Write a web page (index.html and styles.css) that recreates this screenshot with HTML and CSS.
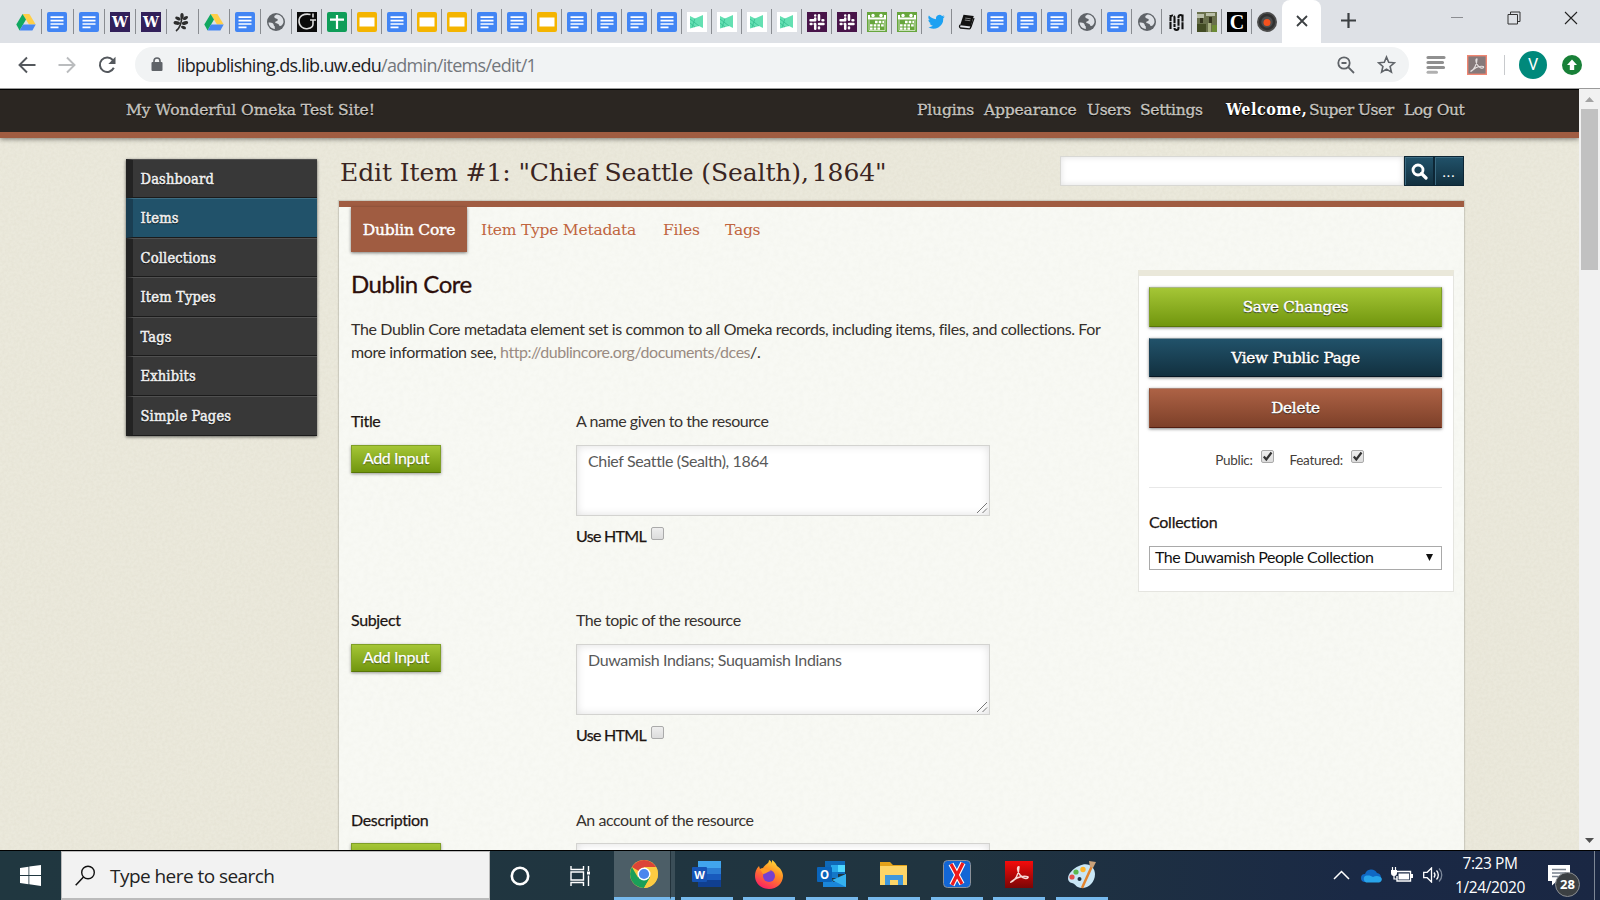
FILE: index.html
```html
<!DOCTYPE html>
<html lang="en">
<head>
<meta charset="utf-8">
<title>Edit Item #1</title>
<link rel="stylesheet" href="styles.css">
</head>
<body>
<svg class="defs" width="0" height="0" aria-hidden="true">
  <defs>
    <symbol id="doc" viewBox="0 0 20 20"><rect width="20" height="20" rx="2" fill="#4285f4"/><path d="M3.500 5.200h13M3.500 8.600h13M3.500 12h13M3.500 15.300h8" stroke="#fff" stroke-width="1.700"/></symbol>
    <symbol id="drive" viewBox="0 0 20 20"><path d="M6.600 2h6.800l6.300 10.500h-6.700z" fill="#ffcf48"/><path d="M6.600 2 10 7.600 3.600 18.500.3 12.500z" fill="#11a861"/><path d="M7 12.500h12.700l-3.300 6H3.600z" fill="#4787f3"/></symbol>
    <symbol id="uw" viewBox="0 0 20 20"><rect width="20" height="20" fill="#32205a"/><text x="10" y="15" text-anchor="middle" textLength="16" lengthAdjust="spacingAndGlyphs" font-family="DejaVu Serif" font-weight="bold" font-size="14" fill="#fff">W</text></symbol>
    <symbol id="leaf" viewBox="0 0 20 20"><path d="M4 19C8 16 10 11 10 2" fill="none" stroke="#2d2d2d" stroke-width="1.600"/><g fill="#2d2d2d"><ellipse cx="10" cy="4" rx="1.700" ry="3"/><ellipse cx="6" cy="6.500" rx="3" ry="1.600" transform="rotate(25 6 6.500)"/><ellipse cx="13.500" cy="6" rx="2.800" ry="1.600" transform="rotate(-30 13.500 6)"/><ellipse cx="4.800" cy="11" rx="3.300" ry="1.800" transform="rotate(8 4.800 11)"/><ellipse cx="13" cy="11" rx="3.200" ry="1.800" transform="rotate(-12 13 11)"/><ellipse cx="11.500" cy="15.500" rx="2.600" ry="1.500" transform="rotate(20 11.500 15.500)"/></g></symbol>
    <symbol id="globe" viewBox="0 0 20 20"><circle cx="10" cy="10" r="9" fill="#5f6368"/><path d="M2.500 10.500c2 .2 3.800.1 4.700 1.300.9 1 .2 2 1.500 2.400l.2 2.900C5.200 16.600 2.800 14 2.500 10.500zM10.800 2.600c-2 .8-3.400 2.200-1.800 3.400 1.200.8 2.700.5 2.800 1.900 0 1.500-2.500.9-2.600 2.300 0 1.500 2.500 1 3.400 2 .6.800.3 1.700 1.500 1.800 1.500 0 2.700-1.500 3.400-3.800.2-4-2.700-7.300-6.700-7.600z" fill="#dee1e6"/></symbol>
    <symbol id="gee" viewBox="0 0 20 20"><rect width="20" height="20" fill="#0b0b0b"/><path d="M13.500 2.500C7 1 2 4 2 9s4 8.500 9 7.500c3.500-.5 5-2 5-4.500V8M13 8h6M16 1.500v4" fill="none" stroke="#ddd" stroke-width="1.600"/></symbol>
    <symbol id="sheet" viewBox="0 0 20 20"><rect width="20" height="20" rx="2" fill="#0f9d58"/><path d="M3 7.700h14M10 3v14" stroke="#fff" stroke-width="2.200"/></symbol>
    <symbol id="slides" viewBox="0 0 20 20"><rect width="20" height="20" rx="2" fill="#f4b400"/><rect x="2.500" y="5.500" width="15" height="9" fill="#fff"/></symbol>
    <symbol id="mesh" viewBox="0 0 20 20"><rect width="20" height="20" fill="#fff"/><path d="M3 4l5 2.500 8-3.500v13l-4-2-9 2.500z" fill="#63e0b2"/><path d="M3 7l9 7M3 11l5 4M8 6.500l-3 9" stroke="#35bd91" stroke-width=".8"/></symbol>
    <symbol id="slack" viewBox="0 0 20 20"><rect width="20" height="20" fill="#481449"/><g stroke="#fff" stroke-width="2.500" stroke-linecap="round"><path d="M8.200 6.500V7.500M3.500 8.200H8.200M12 3.300V7.800M15.500 8.200h.8M3.700 12h.8M8.200 12.200v4.500M12 12h4.500M12 15.500v.8M8.200 3.500v.1M7.700 12h.4"/></g></symbol>
    <symbol id="cal" viewBox="0 0 20 20"><rect width="20" height="20" fill="#67a63d"/><path d="M2 3v3.500h16V3" fill="none" stroke="#fff" stroke-width="2"/><circle cx="6" cy="3.500" r="1.700" fill="#fff"/><circle cx="14" cy="3.500" r="1.700" fill="#fff"/><path d="M8 10h9M3 13.300h14M3 16.600h11" stroke="#fff" stroke-width="2.300" stroke-dasharray="2.600 1.100"/><path d="M2 7.500v11h16v-11" fill="none" stroke="#e1efd7" stroke-width=".8"/></symbol>
    <symbol id="bird" viewBox="0 0 24 24"><path fill="#1da1f2" d="M23.600 4.900a9.700 9.700 0 0 1-2.800.8 4.900 4.900 0 0 0 2.100-2.700c-.9.600-2 1-3.100 1.200a4.900 4.900 0 0 0-8.400 4.500A13.900 13.900 0 0 1 1.300 3.600a4.900 4.900 0 0 0 1.500 6.500 4.900 4.900 0 0 1-2.200-.6v.1a4.900 4.900 0 0 0 3.900 4.800c-.7.200-1.500.2-2.200.1a4.900 4.900 0 0 0 4.600 3.400A9.900 9.900 0 0 1 0 19.900 13.900 13.900 0 0 0 21.500 7.500c.8-.7 1.500-1.600 2.100-2.600z"/></symbol>
    <symbol id="book" viewBox="0 0 20 20"><path d="M6.500 2 18.500 3.500 15 16 2.500 14.500z" fill="#111"/><path d="M2.500 14c-1 1.500-1 3 .5 3.700l10.500 1c1 0 1.500-2 2-3L18.800 6" fill="none" stroke="#111" stroke-width="1.600"/><path d="M8.500 6l6.500.8M8 8.300l6.500.8" stroke="#999" stroke-width="1"/></symbol>
    <symbol id="em" viewBox="0 0 20 20"><path d="M3.500 17V5.500a2 2 0 0 1 4 0V15M3.500 3v1M7.500 16a2 2 0 0 0 4 0V5a2 2 0 0 1 4 0M15.500 2.500V18" fill="none" stroke="#111" stroke-width="2.100" stroke-dasharray="7 .8"/></symbol>
    <symbol id="photo" viewBox="0 0 20 20"><rect width="20" height="20" fill="#69704c"/><path d="M0 2h7v4H0zM9 1h9v3H9z" fill="#b9bea8"/><path d="M3 6h3v5H3zM12 5h3v6h-3z" fill="#34351f"/><path d="M0 12h9v8H0z" fill="#434c24"/><path d="M11 11h3v9h-3z" fill="#a7b082"/><path d="M15 13h5v7h-5z" fill="#6c8a35"/></symbol>
    <symbol id="cee" viewBox="0 0 20 20"><rect width="20" height="20" fill="#000"/><text x="10" y="16.500" text-anchor="middle" font-family="Liberation Serif" font-weight="bold" font-size="20" fill="#fff">C</text></symbol>
    <symbol id="disc" viewBox="0 0 20 20"><circle cx="10" cy="10" r="10" fill="#4d4d4d"/><circle cx="10" cy="10" r="7" fill="none" stroke="#303030" stroke-width="2.500"/><circle cx="10" cy="10.500" r="3.500" fill="#f4511e"/></symbol>
  </defs>
</svg>
<div class="screen">
  <div class="tabstrip">
    <div class="tabs">
      <span class="tab wide"><svg class="fav"><use href="#drive"/></svg></span><span class="tab wide"><svg class="fav"><use href="#doc"/></svg></span><span class="tab wide"><svg class="fav"><use href="#doc"/></svg></span><span class="tab wide"><svg class="fav"><use href="#uw"/></svg></span><span class="tab wide"><svg class="fav"><use href="#uw"/></svg></span><span class="tab wide"><svg class="fav"><use href="#leaf"/></svg></span><span class="tab wide"><svg class="fav"><use href="#drive"/></svg></span><span class="tab wide"><svg class="fav"><use href="#doc"/></svg></span><span class="tab wide"><svg class="fav"><use href="#globe"/></svg></span>
      <span class="tab"><svg class="fav"><use href="#gee"/></svg></span><span class="tab"><svg class="fav"><use href="#sheet"/></svg></span><span class="tab"><svg class="fav"><use href="#slides"/></svg></span><span class="tab"><svg class="fav"><use href="#doc"/></svg></span><span class="tab"><svg class="fav"><use href="#slides"/></svg></span><span class="tab"><svg class="fav"><use href="#slides"/></svg></span><span class="tab"><svg class="fav"><use href="#doc"/></svg></span><span class="tab"><svg class="fav"><use href="#doc"/></svg></span><span class="tab"><svg class="fav"><use href="#slides"/></svg></span>
      <span class="tab"><svg class="fav"><use href="#doc"/></svg></span><span class="tab"><svg class="fav"><use href="#doc"/></svg></span><span class="tab"><svg class="fav"><use href="#doc"/></svg></span><span class="tab"><svg class="fav"><use href="#doc"/></svg></span>
      <span class="tab"><svg class="fav"><use href="#mesh"/></svg></span><span class="tab"><svg class="fav"><use href="#mesh"/></svg></span><span class="tab"><svg class="fav"><use href="#mesh"/></svg></span><span class="tab"><svg class="fav"><use href="#mesh"/></svg></span>
      <span class="tab"><svg class="fav"><use href="#slack"/></svg></span><span class="tab"><svg class="fav"><use href="#slack"/></svg></span><span class="tab"><svg class="fav"><use href="#cal"/></svg></span><span class="tab"><svg class="fav"><use href="#cal"/></svg></span><span class="tab"><svg class="fav small"><use href="#bird"/></svg></span><span class="tab"><svg class="fav small"><use href="#book"/></svg></span>
      <span class="tab"><svg class="fav"><use href="#doc"/></svg></span><span class="tab"><svg class="fav"><use href="#doc"/></svg></span><span class="tab"><svg class="fav"><use href="#doc"/></svg></span><span class="tab"><svg class="fav"><use href="#globe"/></svg></span><span class="tab"><svg class="fav"><use href="#doc"/></svg></span><span class="tab"><svg class="fav"><use href="#globe"/></svg></span><span class="tab"><svg class="fav"><use href="#em"/></svg></span><span class="tab"><svg class="fav"><use href="#photo"/></svg></span><span class="tab"><svg class="fav"><use href="#cee"/></svg></span><span class="tab last"><svg class="fav"><use href="#disc"/></svg></span>
    </div>
    <div class="tab-active"><svg width="12" height="12" viewBox="0 0 12 12"><path d="M1 1l10 10M11 1 1 11" stroke="#3c4043" stroke-width="1.800"/></svg></div>
    <svg class="newtab" width="15" height="15" viewBox="0 0 15 15"><path d="M7.500 0v15M0 7.500h15" stroke="#3c4043" stroke-width="2.200"/></svg>
    <div class="winctl">
      <svg width="14" height="14" viewBox="0 0 14 14"><path d="M1 6.500h12" stroke="#8b8d91"/></svg>
      <svg width="14" height="14" viewBox="0 0 14 14"><path d="M1 3.500h9.500V13H1zM3.500 3.500v-2.500h9.500v9.500h-2.500" fill="none" stroke="#333"/></svg>
      <svg width="14" height="14" viewBox="0 0 14 14"><path d="M1 1l12 12M13 1 1 13" stroke="#222" stroke-width="1.100"/></svg>
    </div>
  </div>
  <div class="toolbar">
    <div class="navbtns">
      <svg width="18" height="18" viewBox="0 0 18 18"><path d="M17.500 9H1.500M9 1.500 1.500 9 9 16.500" fill="none" stroke="#54585d" stroke-width="1.900"/></svg>
      <svg width="18" height="18" viewBox="0 0 18 18"><path d="M.5 9h16M9 1.500 16.500 9 9 16.500" fill="none" stroke="#babcbe" stroke-width="1.900"/></svg>
      <svg width="19" height="18" viewBox="0 0 19 18"><path d="M15.800 11.800A7.300 7.300 0 1 1 14.800 4" fill="none" stroke="#54585d" stroke-width="2"/><path d="M17.500.8V8h-7.200z" fill="#54585d"/></svg>
    </div>
    <div class="omnibox">
      <svg width="12" height="15" viewBox="0 0 12 15"><rect x=".5" y="5" width="11" height="9" rx="1" fill="#5f6368"/><path d="M3 6V4a3 3 0 0 1 6 0v2" fill="none" stroke="#5f6368" stroke-width="1.600"/></svg>
      <span class="url">libpublishing.ds.lib.uw.edu<span class="path">/admin/items/edit/1</span></span>
      <span class="grow"></span>
      <svg class="mag" width="18" height="18" viewBox="0 0 18 18"><circle cx="7" cy="7" r="5.700" fill="none" stroke="#5f6368" stroke-width="1.800"/><path d="M11.200 11.200 17 17M4.500 7h5" stroke="#5f6368" stroke-width="1.800"/></svg>
      <svg width="19" height="19" viewBox="0 0 19 19"><path d="M9.500 2l2.200 5.300 5.700.5-4.300 3.700 1.300 5.600-4.900-3-4.900 3 1.300-5.600L1.600 7.800l5.700-.5z" fill="none" stroke="#5f6368" stroke-width="1.600"/></svg>
    </div>
    <svg class="ext" width="20" height="20" viewBox="0 0 20 20"><path d="M2 2.500h16M2 7.500h14.500M2 12.500h15.500" stroke="#909090" stroke-width="3.200" stroke-linecap="round"/><path d="M2 17.300h8.500" stroke="#b0b0b0" stroke-width="3" stroke-linecap="round"/></svg>
    <svg class="ext2" width="20" height="20" viewBox="0 0 20 20"><rect x=".7" y=".7" width="18.600" height="18.600" fill="#85797a" stroke="#ef8672" stroke-width="1.400"/><path d="M4 16c3-1 6-7 6-12-1.500-.5-1.500 3 .5 6s5 4 6 2.500-4-2-8 .5-5 4-4.500 3z" fill="none" stroke="#e4dede" stroke-width="1.200"/></svg>
    <span class="vline"></span>
    <span class="avatar">V</span>
    <svg class="upd" width="20" height="20" viewBox="0 0 20 20"><circle cx="10" cy="10" r="10" fill="#188038"/><path d="M10 4.500l5 5.500h-2.800v5H7.800v-5H5z" fill="#fff"/></svg>
  </div>

  <div class="viewport">
    <div class="page">
      <header class="head">
        <span class="site">My Wonderful Omeka Test Site!</span>
        <nav class="topnav">
          <span class="n1">Plugins</span><span class="n2">Appearance</span><span class="n3">Users</span><span class="n4">Settings</span><b class="n5">Welcome,</b><span class="n6">Super User</span><span class="n7">Log Out</span>
        </nav>
      </header>
      <div class="body">
        <nav class="side">
          <a>Dashboard</a><a class="on">Items</a><a>Collections</a><a>Item Types</a><a>Tags</a><a>Exhibits</a><a>Simple Pages</a>
        </nav>
        <main class="main">
          <div class="titlebar">
            <h1>Edit Item #1: "Chief Seattle (Sealth),<span class="tight"> </span>1864"</h1>
            <div class="search">
              <span class="field"></span>
              <span class="sbtn"><svg width="17" height="17" viewBox="0 0 17 17"><circle cx="7" cy="7" r="5" fill="none" stroke="#fff" stroke-width="2.800"/><path d="M10.500 10.500 15 15" stroke="#fff" stroke-width="3.200" stroke-linecap="round"/></svg></span>
              <span class="sbtn dots">...</span>
            </div>
          </div>
          <div class="panel">
            <div class="ptabs"><span class="pt on">Dublin Core</span><span class="pt t2">Item Type Metadata</span><span class="pt t3">Files</span><span class="pt t4">Tags</span></div>
            <div class="cols">
              <section class="form">
                <h2>Dublin Core</h2>
                <p class="intro">The Dublin Core metadata element set is common to all Omeka records, including items, files, and collections. For<br>more information see, <span class="link">http://dublincore.org/documents/dces</span>/.</p>
                <div class="row">
                  <div class="left"><div class="label">Title</div><span class="add">Add Input</span></div>
                  <div class="right"><div class="desc">A name given to the resource</div><div class="area">Chief Seattle (Sealth), 1864<svg class="grip" width="12" height="12" viewBox="0 0 12 12"><path d="M1 11 11 1M6.500 11 11 6.500" stroke="#777"/></svg></div><div class="html"><span>Use HTML</span><i class="cb"></i></div></div>
                </div>
                <div class="row">
                  <div class="left"><div class="label">Subject</div><span class="add">Add Input</span></div>
                  <div class="right"><div class="desc">The topic of the resource</div><div class="area">Duwamish Indians; Suquamish Indians<svg class="grip" width="12" height="12" viewBox="0 0 12 12"><path d="M1 11 11 1M6.500 11 11 6.500" stroke="#777"/></svg></div><div class="html"><span>Use HTML</span><i class="cb"></i></div></div>
                </div>
                <div class="row">
                  <div class="left"><div class="label">Description</div><span class="add">Add Input</span></div>
                  <div class="right"><div class="desc">An account of the resource</div><div class="area"></div></div>
                </div>
              </section>
              <aside class="save">
                <span class="big green">Save Changes</span>
                <span class="big blue">View Public Page</span>
                <span class="big red">Delete</span>
                <div class="flags"><span>Public:</span><i class="cb"><svg width="11" height="11" viewBox="0 0 11 11"><path d="M1.800 5.500 4.300 8.500 9.500 1.500" fill="none" stroke="#333" stroke-width="2.200"/></svg></i><span class="feat">Featured:</span><i class="cb"><svg width="11" height="11" viewBox="0 0 11 11"><path d="M1.800 5.500 4.300 8.500 9.500 1.500" fill="none" stroke="#333" stroke-width="2.200"/></svg></i></div>
                <div class="coll">Collection</div>
                <div class="select"><span>The Duwamish People Collection</span><svg width="7" height="7" viewBox="0 0 7 7"><path d="M0 0h7L3.500 7z" fill="#111"/></svg></div>
              </aside>
            </div>
          </div>
        </main>
      </div>
    </div>
    <div class="scroll">
      <svg width="9" height="5" viewBox="0 0 9 5"><path d="M0 5 4.500 0 9 5z" fill="#a3a3a3"/></svg>
      <span class="thumb"></span>
      <svg class="down" width="9" height="5" viewBox="0 0 9 5"><path d="M0 0h9L4.500 5z" fill="#505050"/></svg>
    </div>
  </div>

  <footer class="taskbar">
    <div class="start"><svg width="21" height="21" viewBox="0 0 21 21"><path d="M0 3 8.500 1.700V10H0zM9.300 1.600 21 0v10H9.300zM0 10.900h8.500v8.300L0 18zM9.300 10.900H21V21l-11.700-1.700z" fill="#fff"/></svg></div>
    <div class="find"><svg width="21" height="21" viewBox="0 0 21 21"><circle cx="13" cy="7.500" r="6.300" fill="none" stroke="#111" stroke-width="1.400"/><path d="M8.500 12 .7 20.300" stroke="#111" stroke-width="1.500"/></svg><span>Type here to search</span></div>
    <div class="cell ct"><svg width="20" height="20" viewBox="0 0 20 20"><circle cx="10" cy="10" r="8.200" fill="none" stroke="#fff" stroke-width="2.600"/></svg></div>
    <div class="cell tv"><svg width="21" height="20" viewBox="0 0 21 20"><path d="M1 0v3.500h12.500V0M1 20v-3.500h12.500V20M1 6h12.500v8H1zM18.500 0v5M18.500 9.500V20" fill="none" stroke="#fff" stroke-width="1.400"/><path d="M17 5.500h3v3h-3z" fill="#fff"/></svg></div>
    <div class="app chrome"><svg width="28" height="28" viewBox="0 0 28 28"><circle cx="14" cy="14" r="14" fill="#fdcb42"/><path d="M14 14 1.900 7A14 14 0 0 1 26.100 7H14z" fill="#dc4437"/><path d="M1.900 7A14 14 0 0 0 14 28l6.100-10.500L14 14 8 17.500z" fill="#1b9f59"/><path d="M14 7h12.100A14 14 0 0 1 14 28l6.100-10.500z" fill="#fdcb42"/><circle cx="14" cy="14" r="6.500" fill="#fff"/><circle cx="14" cy="14" r="5.100" fill="#4a86ee"/></svg></div>
    <span class="stack"></span>
    <div class="app"><svg width="29" height="28" viewBox="0 0 29 28"><path d="M6 1h23v7H6z" fill="#41a5ee"/><path d="M6 8h23v6H6z" fill="#2b7cd3"/><path d="M6 14h23v6H6z" fill="#185abd"/><path d="M6 20h23v7H6z" fill="#103f91"/><rect y="7" width="15" height="15" rx="1" fill="#1654b6"/><text x="7.500" y="18.500" text-anchor="middle" font-family="Open Sans" font-weight="bold" font-size="11" fill="#fff">W</text></svg></div>
    <div class="app"><svg width="28" height="29" viewBox="0 0 28 29"><defs><linearGradient id="ff" x1=".8" y1="0" x2=".3" y2="1"><stop offset="0" stop-color="#ffe23c"/><stop offset=".45" stop-color="#ff8a22"/><stop offset="1" stop-color="#fb1d66"/></linearGradient></defs><path d="M17 0c3 2 4 4 5 6 5 3 6 8 6 10 0 7-6 13-14 13S0 23 0 16c0-4 1-7 4-10l1 3 3-1c2-4 6-4 6-8 2 1 3 2 3 4z" fill="url(#ff)"/><circle cx="14" cy="16" r="6" fill="#7540cf"/><path d="M5 9c4-2 8 0 11 2-3 0-5 3-8 3z" fill="#ff9c25"/></svg></div>
    <div class="app"><svg width="29" height="28" viewBox="0 0 29 28"><path d="M8 1h20v13H8z" fill="#0f69b8"/><path d="M14 5h7v7h-7z" fill="#28a8ea"/><path d="M21 5h7v7h-7z" fill="#50d9ff"/><path d="M14 12h7v6h-7z" fill="#1478c8"/><path d="M6 15l11 7 12-8v13H6z" fill="#1a86d9"/><path d="M29 14v13L15 20z" fill="#35b1ee"/><rect y="7" width="15" height="15" rx="1" fill="#0a64ba"/><text x="7.500" y="18.500" text-anchor="middle" font-family="Open Sans" font-weight="bold" font-size="11.500" fill="#fff">O</text></svg></div>
    <div class="app"><svg width="28" height="24" viewBox="0 0 28 24"><path d="M0 0h10l3 3h14v9H0z" fill="#e3a21a"/><path d="M0 4h27v19H0z" fill="#fdd568"/><path d="M5 13h18v10h-5v-5h-8v5H5z" fill="#3f97dc"/></svg></div>
    <div class="app"><svg width="28" height="28" viewBox="0 0 28 28"><rect x=".5" y=".5" width="27" height="27" rx="4" fill="#1266d6" stroke="#8b9199"/><path d="M8 4l11 20M20 3 9 25" stroke="#fff" stroke-width="5.500"/><path d="M8 4l11 20M20 3 9 25" stroke="#ee1b1b" stroke-width="3.300"/></svg></div>
    <div class="app"><svg width="28" height="27" viewBox="0 0 28 27"><defs><linearGradient id="ac" x1="0" y1="0" x2="0" y2="1"><stop offset="0" stop-color="#f50b0b"/><stop offset="1" stop-color="#7b0606"/></linearGradient></defs><rect width="28" height="27" fill="url(#ac)"/><path d="M6 21c4-1 8-8 8-15-2-1-2 4 1 8s7 4 8 2.500-6-2-11 .5-7 5-6 4z" fill="none" stroke="#f7d9d5" stroke-width="1.500"/></svg></div>
    <div class="app"><svg width="30" height="29" viewBox="0 0 30 29"><path d="M12 6c9-5 16 1 16 8 0 8-6 14-13 14-6 0-6-4-10-5-8-2-3-13 7-17z" fill="#c9e6f6"/><circle cx="5" cy="17" r="2.600" fill="#e2504b"/><circle cx="9" cy="12" r="2.600" fill="#5cb84c"/><circle cx="16" cy="9.500" r="2.700" fill="#ffb52b"/><circle cx="12.500" cy="19" r="2" fill="#1f3340"/><path d="M15 28 25 6" stroke="#e2842f" stroke-width="2.500"/><path d="M22 1l7 1-3 6-3-1z" fill="#caa27a"/></svg></div>
    <span class="grow"></span>
    <div class="tray">
      <svg class="y1" width="17" height="10" viewBox="0 0 17 10"><path d="M1 9l7.500-7.500L16 9" fill="none" stroke="#fff" stroke-width="1.500"/></svg>
      <svg class="y2" width="21" height="14" viewBox="0 0 21 14"><path d="M4 13a4 4 0 0 1 0-8 6.500 6.500 0 0 1 12-1 4.700 4.700 0 0 1 1 9z" fill="#1068c4"/><path d="M5 13.500a4 4 0 0 1-1-6.500c4-1 6 0 8 1 3-2 8-1 8.700 1.500.6 2-1 4-3 4z" fill="#28a4ea"/></svg>
      <svg class="y3" width="22" height="16" viewBox="0 0 22 16"><path d="M6 4.500h13.500v9.500H6V9" fill="none" stroke="#fff" stroke-width="1.400"/><path d="M7.500 6.500h10.500v6H7.500z" fill="#fff"/><path d="M20 7h2v4h-2zM0 3h6v3a3 3 0 0 1-6 0z" fill="#fff"/><path d="M1.500 0v3M4.500 0v3M3 8v4h3" fill="none" stroke="#fff" stroke-width="1.200"/></svg>
      <svg class="y4" width="20" height="16" viewBox="0 0 20 16"><path d="M.7 5.300h3.500L8.500 1v14l-4.300-4.300H.7z" fill="none" stroke="#fff" stroke-width="1.300"/><path d="M11 5.500a4 4 0 0 1 0 5M13.500 3.500a6.500 6.500 0 0 1 0 9" fill="none" stroke="#fff" stroke-width="1.300"/><path d="M16 1.500a9 9 0 0 1 0 13" fill="none" stroke="#7d899b" stroke-width="1.300"/></svg>
    </div>
    <div class="clock"><span class="ck1">7:23 PM</span><span class="ck2">1/24/2020</span></div>
    <div class="notif"><svg width="22" height="21" viewBox="0 0 22 21"><path d="M0 0h22v16H9l-5 4.500V16H0z" fill="#fff"/><path d="M4 4.500h14M4 8h14M4 11.500h8" stroke="#78818d" stroke-width="1.300"/></svg><span class="badge">28</span></div>
    <span class="desk"></span>
  </footer>
</div>
</body>
</html>
```
FILE: styles.css
```css
* { box-sizing: border-box; }
body { margin: 0; background: #fff; }
svg { display: block; flex: none; }
.defs { position: absolute; }
.grow { flex: 1; }
.screen { width: 1600px; height: 900px; overflow: hidden; display: flex; flex-direction: column; font-family: Lato, sans-serif; white-space: nowrap; }

/* browser tabs */
.tabstrip { height: 43px; flex: none; background: #dee1e6; display: flex; padding-left: 11px; }
.tabs { display: flex; align-items: flex-start; padding-top: 9px; width: 1271.250px; flex: none; }
.tab { width: 30px; height: 25px; flex: none; display: flex; align-items: center; justify-content: center; border-right: 1px solid #898c91; }
.tab.wide { width: 31.250px; }
.tab.last { border-right: 0; }
.fav { width: 20px; height: 20px; }
.fav.small { width: 17px; height: 17px; }
.tab-active { width: 39px; background: #fff; border-radius: 8px 8px 0 0; display: flex; justify-content: center; padding-top: 15px; }
.newtab { margin: 13px 0 0 20px; }
.winctl { display: flex; gap: 43px; margin: 11px 0 0 94px; }

/* address bar */
.toolbar { height: 46px; flex: none; background: #fff; display: flex; align-items: center; padding-bottom: 2px; border-bottom: 1px solid #9a9a9a; }
.navbtns { display: flex; gap: 22px; width: 135px; padding-left: 18px; flex: none; }
.omnibox { width: 1274px; height: 35px; border-radius: 18px; background: #f1f3f4; display: flex; align-items: center; padding: 0 13px 0 16px; flex: none; }
.url { font: 18px "Open Sans", sans-serif; letter-spacing: -.7px; color: #202124; margin-left: 14px; padding-top: 1px; }
.path { color: #73777c; }
.mag { margin-right: 22px; }
.ext { margin-left: 17px; }
.ext2 { margin-left: 21px; }
.vline { width: 1px; height: 20px; background: #c8cacd; margin: 0 14px 0 17px; }
.avatar { width: 28px; height: 28px; border-radius: 50%; background: #00897b; color: #fff; font: 16px/28px Roboto, sans-serif; text-align: center; }
.upd { margin-left: 15px; }

/* web page */
.viewport { height: 761px; flex: none; display: flex; overflow: hidden; }
.page { width: 1579px; height: 761px; overflow: hidden; background-color: #ebe9dc; background-image: url("data:image/svg+xml,%3Csvg xmlns='http://www.w3.org/2000/svg' width='200' height='200'%3E%3Cfilter id='n'%3E%3CfeTurbulence type='fractalNoise' baseFrequency='.35' numOctaves='2' stitchTiles='stitch'/%3E%3CfeColorMatrix values='0 0 0 0 .55 0 0 0 0 .52 0 0 0 0 .4 .22 0 0 0 -.06'/%3E%3C/filter%3E%3Crect width='200' height='200' filter='url(%23n)'/%3E%3C/svg%3E"); }
.head { height: 48.500px; background: #2b2622; border-top: 1px solid #000; border-bottom: 6px solid #a05c41; box-shadow: 0 1px 5px rgba(0,0,0,.5); display: flex; justify-content: space-between; padding: 0 115px 0 126px; font: 15.500px/40px "DejaVu Serif", serif; color: #c6c3bf; -webkit-text-stroke: .35px #c6c3bf; text-shadow: 0 1px 1px #000; letter-spacing: -.15px; }
.site { letter-spacing: -.06px; }
.topnav { display: flex; }
.n1 { width: 67px; } .n2 { width: 103px; } .n3 { width: 53px; letter-spacing: -.35px; } .n4 { width: 86px; letter-spacing: -.3px; } .n5 { width: 83px; color: #fff; font: bold 16px/40px "DejaVu Serif Condensed", "DejaVu Serif", serif; font-stretch: condensed; letter-spacing: .5px; -webkit-text-stroke: 0; } .n6 { width: 95px; letter-spacing: -.5px; } .n7 { width: 60px; letter-spacing: -.45px; }
.body { display: flex; padding: 21px 115px 0 126px; }
.side { width: 191px; height: 277px; flex: none; background: #383838; box-shadow: 0 1px 3px rgba(0,0,0,.6); display: flex; flex-direction: column; }
.side a { flex: 1; border-top: 1px solid #505050; border-bottom: 1px solid #1b1b1b; border-left: 7px solid #232323; padding: 1px 0 0 7.500px; font: 14.500px/36.500px "DejaVu Serif Condensed", "DejaVu Serif", serif; font-stretch: condensed; letter-spacing: .18px; -webkit-text-stroke: .5px #f0f0f0; color: #f0f0f0; text-shadow: 0 1px 1px #000; }
.side a.on { background: #21526a; border-left-color: #1a3e52; border-top-color: #3d6d83; }
.main { width: 1125px; margin-left: 22px; flex: none; margin-top: -2.500px; }
.titlebar { height: 45px; display: flex; justify-content: space-between; align-items: flex-start; }
h1 { margin: 0 0 0 1px; font: 25px/34px "DejaVu Serif", serif; letter-spacing: -.1px; color: #3a2522; }
.tight { letter-spacing: -5px; }
.search { display: flex; height: 30px; }
.field { width: 344px; background: #fff; border: 1px solid #d8d8d4; box-shadow: inset 0 0 6px rgba(0,0,0,.12); }
.sbtn { width: 30px; background: linear-gradient(#21526a, #12303f); border: 1px solid #0d2635; box-shadow: inset 1px 1px 0 #3b6a81; display: flex; align-items: center; justify-content: center; color: #fff; }
.dots { font: 14px/32px Lato, sans-serif; letter-spacing: 1px; padding-top: 1px; }
.panel { height: 700px; border-top: 6px solid #a05c41; background-color: #f8f9f4; box-shadow: 0 0 1px 1px rgba(0,0,0,.12); padding-left: 12px; background-image: url("data:image/svg+xml,%3Csvg xmlns='http://www.w3.org/2000/svg' width='200' height='200'%3E%3Cfilter id='n'%3E%3CfeTurbulence type='fractalNoise' baseFrequency='.2' numOctaves='2' stitchTiles='stitch'/%3E%3CfeColorMatrix values='0 0 0 0 .6 0 0 0 0 .6 0 0 0 0 .5 .12 0 0 0 -.04'/%3E%3C/filter%3E%3Crect width='200' height='200' filter='url(%23n)'/%3E%3C/svg%3E"); }
.ptabs { display: flex; height: 45px; font: 15.500px/46px "DejaVu Serif", serif; letter-spacing: -.24px; color: #c0653f; }
.pt.on { width: 116px; text-align: center; background: #a05c41; color: #fff; -webkit-text-stroke: .4px #fff; box-shadow: 0 1px 3px rgba(0,0,0,.5); }
.t2 { width: 182px; margin-left: 14px; } .t3 { width: 62px; }
.cols { display: flex; }
.form { width: 786px; }
h2 { margin: 16px 0 0; font: 24px/32px Lato, sans-serif; letter-spacing: -.5px; -webkit-text-stroke: .3px #2d0f0b; color: #2d0f0b; }
.intro { margin: 16.500px 0 0; font-size: 16px; line-height: 23.500px; letter-spacing: -.38px; color: #35302c; height: 91.500px; }
.link { color: #9a8b82; letter-spacing: -.46px; }
.row { display: flex; height: 199.300px; }
.left { width: 225px; flex: none; }
.label, .coll, .html { -webkit-text-stroke: .25px #1d1512; color: #1d1512; font-size: 16px; letter-spacing: -.4px; }
.label, .desc { height: 36.500px; line-height: 25px; font-size: 16px; letter-spacing: -.35px; }
.desc { color: #37322f; letter-spacing: -.45px; }
.add { display: block; width: 90px; height: 28px; background: linear-gradient(#a5c636, #71960e); border: 1px solid #7f9f26; border-bottom-color: #587608; box-shadow: 0 1px 3px rgba(0,0,0,.4); color: #fff; text-align: center; font-size: 16px; line-height: 24px; letter-spacing: -.4px; text-shadow: 0 1px 1px #3e5203; -webkit-text-stroke: .25px #fff; }
.area { position: relative; width: 414px; height: 71px; background: #fff; border: 1px solid #d3d3d0; box-shadow: inset 0 0 8px rgba(0,0,0,.13); padding: 3px 11px; font-size: 16px; line-height: 23px; letter-spacing: -.37px; color: #595959; }
.grip { position: absolute; right: 1px; bottom: 1px; }
.html { display: flex; height: 40px; padding-top: 8px; line-height: 23px; letter-spacing: -.7px; }
.cb { width: 13px; height: 13px; border: 1px solid #aaa; border-radius: 2px; background: linear-gradient(#eee, #dcdcdc); margin: 3px 0 0 5px; flex: none; }
.save { width: 316px; height: 322px; margin: 18px 0 0 1px; background: #fff; border: 1px solid #e5e5e0; border-top: 6px solid #eae8da; padding: 11px 11px 0 10px; }
.big { display: block; height: 39.500px; margin-bottom: 11.200px; color: #fff; text-align: center; font: 15.200px/38px "DejaVu Serif", serif; letter-spacing: -.25px; -webkit-text-stroke: .4px #fff; text-shadow: 0 1px 1px #222; box-shadow: 0 1px 3px rgba(0,0,0,.5); border: 1px solid; }
.green { background: linear-gradient(#a5c636, #71960e); border-color: #a9b881 #7f9f26 #587608; }
.blue { background: linear-gradient(#21526a, #12303f); border-color: #7f929b #1a4156 #071724; }
.red { background: linear-gradient(#ad6245, #7d4029); border-color: #ab8476 #8f4e34 #531e11; }
.flags { height: 49px; border-bottom: 1px solid #e8e8e8; display: flex; justify-content: center; font-size: 13.500px; line-height: 30px; padding-top: 6px; color: #443e3a; letter-spacing: -.3px; padding-right: 12px; }
.flags .cb { margin: 5px 0 0 8px; }
.feat { margin-left: 16px; }
.coll { line-height: 24px; margin-top: 22px; letter-spacing: -.25px; }
.select { margin-top: 11.500px; height: 24px; border: 1px solid #a9a9a9; display: flex; justify-content: space-between; align-items: center; padding: 0 8px 1px 5px; font-size: 16px; line-height: 20px; letter-spacing: -.45px; color: #111; }
.scroll { width: 21px; background: #f1f1f1; display: flex; flex-direction: column; align-items: center; padding-top: 8px; }
.thumb { width: 17px; height: 161px; background: #c1c1c1; margin-top: 7px; }
.down { margin-top: 568px; }

/* taskbar */
.taskbar { height: 50px; flex: none; border-top: 1px solid #000; display: flex; background: linear-gradient(90deg, #203740, #203440 60%, #1a2945 85%, #1a2743); }
.start { width: 61px; padding: 14px 0 0 20px; }
.find { width: 429px; background: #f2f2f2; border: 1px solid #bbb; border-bottom-width: 2px; display: flex; align-items: center; padding-left: 13px; font: 19px/30px "Open Sans", sans-serif; letter-spacing: -.55px; color: #222; }
.find span { margin-left: 14px; padding-top: 2px; }
.cell { display: flex; align-items: center; justify-content: center; }
.ct { width: 60px; } .tv { width: 64px; padding-right: 4px; }
.app { width: 52px; margin-right: 10.500px; display: flex; align-items: center; justify-content: center; border-bottom: 3px solid #76b9ed; flex: none; }
.app.chrome { width: 56px; margin: 0; background: #4c5e67; padding-left: 4px; }
.stack { width: 5px; margin-right: 6px; background: #3b4e58; border-left: 1px solid #22323b; border-bottom: 3px solid #76b9ed; }
.stack + .app { margin-left: -.5px; }
.tray { display: flex; padding-top: 16px; }
.y1 { margin: 3px 11px 0 0; } .y2 { margin: 2px 9px 0 0; } .y3 { margin-right: 10px; }
.clock { width: 70px; margin-left: 12px; display: flex; flex-direction: column; align-items: center; font: 15.500px/24px "Open Sans", sans-serif; color: #fff; letter-spacing: -.4px; }
.notif { position: relative; width: 46px; margin-left: 23px; padding-top: 14px; }
.badge { position: absolute; left: 7px; top: 21px; width: 25px; height: 25px; border-radius: 50%; background: #3c4043; border: 1px solid #8a8d92; color: #fff; font: bold 13px/22px "Open Sans", sans-serif; text-align: center; }
.desk { width: 6px; border-left: 1px solid #7d8796; }
```
